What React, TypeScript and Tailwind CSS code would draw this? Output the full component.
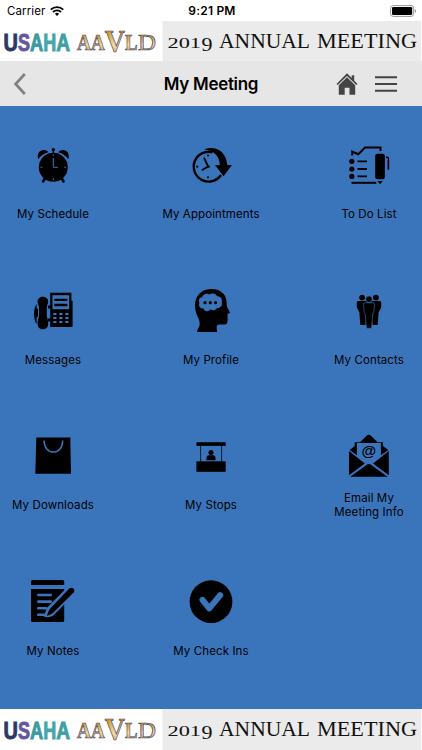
import type { ReactNode } from 'react';

const BLUE = '#3a75bb';

function Icon({ children }: { children: ReactNode }) {
  return (
    <svg viewBox="0 0 48 48" className="w-12 h-12 shrink-0" fill="#000">
      {children}
    </svg>
  );
}

function ScheduleIcon() {
  return (
    <Icon>
      <path d="M9.3 18.2C7.6 13.2 10.4 9 14.6 9c2 0 3.6.9 4.8 2.2-4 1-7.600 3.600-10.100 7z" />
      <path d="M39.300 18.200C41 13.200 38.200 9 34 9c-2 0-3.600.9-4.800 2.200 4 1 7.600 3.600 10.100 7z" />
      <circle cx="24.300" cy="8.600" r="1.700" />
      <path d="M23.600 9h1.400v4h-1.400z" />
      <path d="M16.500 36.500 14.200 40.300M32.200 36.500l2.200 3.800" stroke="#000" strokeWidth="2.800" strokeLinecap="round" />
      <circle cx="24.300" cy="26.200" r="14.500" />
      <path
        d="M24.300 17v9.300h4.600M24.300 13.200v1.600M24.300 37.200v2M11.400 26.200h2M35.200 26.200h2"
        fill="none"
        stroke={BLUE}
        strokeWidth="1"
      />
    </Icon>
  );
}

function AppointmentsIcon() {
  return (
    <Icon>
      <path
        d="M25.500 11.300A14.900 14.900 0 1 0 34 34"
        fill="none"
        stroke="#000"
        strokeWidth="2.400"
      />
      <path d="M17 8.500C27 4.500 39 9 40.200 24H45l-8.500 11.200L28 24h4.800C32.600 15 27 9.500 17 8.500z" />
      <path d="m17.300 17.300 3.900 8.200-5.700 3.300" fill="none" stroke="#000" strokeWidth="1.900" strokeLinecap="round" />
      <circle cx="21.200" cy="25.500" r="1.600" />
      <circle cx="21" cy="14.500" r="1.100" />
      <circle cx="10.300" cy="25.700" r="1.100" />
      <circle cx="21" cy="36.300" r="1.100" />
    </Icon>
  );
}

function TodoIcon() {
  return (
    <Icon>
      <path
        d="M7.200 14.500v-4l6.100 2.700 6.700-6.700h15.500v3.600"
        fill="none"
        stroke="#000"
        strokeWidth="2"
      />
      <circle cx="6.800" cy="20.300" r="2.600" />
      <circle cx="6.800" cy="28" r="2.600" />
      <circle cx="6.800" cy="35.400" r="2.600" />
      <path d="M12.500 20.300H22M12.500 28H22M12.500 35.400H22" stroke="#000" strokeWidth="1.800" />
      <path d="M6.500 41.800h24.800" stroke="#000" strokeWidth="2" />
      <rect x="30.200" y="12.800" width="9.700" height="25.400" rx="2.300" />
      <path d="M32.400 40h5.400L35 43.200z" />
      <path d="M41 16.300h1.200q1.200 0 1.200 1.200v11.300" fill="none" stroke="#000" strokeWidth="1.600" />
    </Icon>
  );
}

function MessagesIcon() {
  return (
    <Icon>
      <path d="M21.200 5.800h21.200v8h1.200V39q0 1-1 1H21.200z" />
      <rect x="23.500" y="8.200" width="16.700" height="14" fill={BLUE} />
      <path d="M25.300 12.800h13.100M25.300 18h13.100" stroke="#000" strokeWidth="2.300" />
      <path
        d="M24.300 27h3.200m2.800 0h3.200m2.800 0h3.200M24.300 31h3.200m2.800 0h3.200m2.800 0h3.200M24.300 35h3.200m2.800 0h3.200m2.800 0h3.200"
        stroke={BLUE}
        strokeWidth="1.800"
      />
      <path d="M8.600 14.500c0-6.500 10.600-6.500 10.600 0 0 2.500-1.400 4-1.400 6v8c0 2.200 1.400 3.800 1.400 8.500 0 7-10.600 7-10.600 0 0-4.700 1.400-6.300 1.400-8.500v-8c0-2-1.400-3.500-1.400-6z" />
      <path d="M7.600 17v3.600l1.400 2v6.600l-1.400 2V37c-3.400-5-3.400-15.500 0-20z" />
      <path d="M19 18.500h3v3h-3zM18.500 31.500h3v3h-3z" />
    </Icon>
  );
}

function ProfileIcon() {
  return (
    <Icon>
      <path d="M23.500 2C34 1.600 40 8 39.700 16.500c0 2.500.3 3.500 1.200 5l1.900 3.600c.3.700 0 1.200-.8 1.400l-1.500.4.100 6.300c0 2.800-.8 4.200-3.200 4.200h-5c-2.500 0-3 1.500-2.700 4.200l.6 3.400H10.200c-.4-2.500 2.500-4.500 2.500-8.500 0-5.500-4.700-8.500-4.700-18.500C8 9 14.500 2.300 23.500 2z" />
      <path
        d="M15 10.300c1-3 4.800-4.400 7.200-2.700 3-2 7-.8 7.800 1.700 3.500 0 5.600 2.700 4.800 5.700 1 3.800-1.800 6.500-4.800 6-1.500 2.800-4.600 2.700-6.500 1.300-1.800 2.700-6 2.400-7-.8-3.800.2-5.300-3.200-4-5.600-1.300-2.700-.5-5.200 2.500-5.600z"
        fill={BLUE}
      />
      <circle cx="18" cy="15.700" r="1.600" />
      <circle cx="23.300" cy="15.700" r="1.600" />
      <circle cx="28.600" cy="15.700" r="1.600" />
    </Icon>
  );
}

function ContactsIcon() {
  return (
    <Icon>
      <circle cx="17.100" cy="10.600" r="2.900" />
      <circle cx="30.900" cy="10.600" r="2.900" />
      <path d="M13.300 14h8.200l1 2v10L20.300 38h-5l-.9-12.500-2.600-5V15.500q0-1.500 1.500-1.500z" />
      <path d="M34.700 14h-8.200l-1 2v10l2.200 12h5l.9-12.500 2.600-5V15.500q0-1.500-1.500-1.500z" />
      <g stroke={BLUE} strokeWidth=".6">
        <circle cx="24" cy="12.200" r="3.200" />
        <path d="M20.300 15.800h7.400q2 0 1.800 2l-.7 7.500-1 1.500L26.600 41.200h-5.200l-1.200-14.400-1-1.500-.7-7.500q-.2-2 1.800-2z" />
      </g>
    </Icon>
  );
}

function DownloadsIcon() {
  return (
    <Icon>
      <path d="M7.300 5.600h34L42 41.700H6.300z" />
      <path
        d="M15 8.500c0 7 4.200 11.600 9.400 11.600S33.700 15.500 33.700 8.500"
        fill="none"
        stroke={BLUE}
        strokeWidth="1.500"
      />
    </Icon>
  );
}

function StopsIcon() {
  return (
    <Icon>
      <path d="M9.400 10.200h29.300v3.200q-1 1.400-2 0-1 1.400-2 0-1 1.400-2.100 0-1 1.400-2.100 0-1 1.400-2.100 0-1 1.400-2.100 0-1 1.400-2.100 0-1 1.400-2.100 0-1 1.400-2.100 0-1 1.400-2.100 0-1 1.400-2.100 0-1 1.400-2.100 0-1 1.400-2.200 0-1 1.400-2.100 0z" />
      <path d="M13.600 13.500v16M34.600 13.500v16" stroke="#000" strokeWidth=".8" />
      <circle cx="24" cy="20.400" r="2.500" />
      <path d="M19.500 28.300v-2.800q0-2.300 2.500-2.300h4q2.500 0 2.500 2.300v2.800z" />
      <path d="M9.400 29.300h29.300v10.500H9.400z" />
    </Icon>
  );
}

function EmailIcon() {
  return (
    <Icon>
      <path d="m4.700 18 5-4.100V10.300h5.200l6.700-6.500q2.200-1.900 4.400 0l6.700 6.500h5.200v3.600l5.400 4.100-7 5H11.500z" />
      <path d="M11.900 11h24v12.300L23.900 33l-12-9.700z" fill={BLUE} />
      <path d="m4 19 15.800 12.600L4 43.200zM43.800 19 28 31.600l15.800 11.600zM5.200 44.800l17-12.400q1.700-1 3.400 0l17 12.400z" />
      <text
        x="23.800"
        y="24.200"
        textAnchor="middle"
        fontFamily="Liberation Sans, sans-serif"
        fontWeight="700"
        fontSize="15"
      >
        @
      </text>
    </Icon>
  );
}

function NotesIcon() {
  return (
    <Icon>
      <path d="M3.500 2h30q1.700 0 1.700 1.700V7H2V3.500Q2 2 3.500 2zM2 11h33.200v31.500q0 1.500-1.500 1.500H3.500Q2 44 2 42.500z" />
      <path
        d="M9.300 17h12.500M9.300 23.600h12.500M9.300 30.200h8M9.300 36.700h8"
        stroke={BLUE}
        strokeWidth="2.600"
        strokeLinecap="round"
      />
      <path d="M38.500 9 19 28.800q-2 2.500-2.700 5.700L15 38.800q3.800.8 7.300-.3 1.700-.6 3-2L46 15.800z" fill={BLUE} />
      <path d="M40.500 10.300q2-1.400 3.900.3t.2 4L24.200 34.700q-2.600 2-6.300 3.400 1-4 2.900-7z" />
    </Icon>
  );
}

function CheckIcon() {
  return (
    <Icon>
      <circle cx="24" cy="23.700" r="21.400" />
      <path
        d="m15.500 21.800 6.800 8.600 10.900-13.200"
        fill="none"
        stroke={BLUE}
        strokeWidth="6"
        strokeLinecap="round"
        strokeLinejoin="round"
      />
    </Icon>
  );
}

const items = [
  { label: 'My Schedule', icon: ScheduleIcon },
  { label: 'My Appointments', icon: AppointmentsIcon },
  { label: 'To Do List', icon: TodoIcon },
  { label: 'Messages', icon: MessagesIcon },
  { label: 'My Profile', icon: ProfileIcon },
  { label: 'My Contacts', icon: ContactsIcon },
  { label: 'My Downloads', icon: DownloadsIcon },
  { label: 'My Stops', icon: StopsIcon },
  { label: 'Email My Meeting Info', icon: EmailIcon },
  { label: 'My Notes', icon: NotesIcon },
  { label: 'My Check Ins', icon: CheckIcon },
];

// letters of the two logos, each stretched to its own width
const usaha = [
  { char: 'U', x: 3.6, width: 14.4, fill: '#293868' },
  { char: 'S', x: 18, width: 12, fill: '#65589a' },
  { char: 'A', x: 30, width: 13.2, fill: '#3a9a9f' },
  { char: 'H', x: 43.2, width: 13, fill: '#48a6a8' },
  { char: 'A', x: 56.2, width: 13.8, fill: '#3f9fa3' },
];

const aavld = [
  { char: 'A', x: 77, y: 29, size: 22.5, width: 14 },
  { char: 'A', x: 91, y: 29, size: 22.5, width: 13.8 },
  { char: 'V', x: 104.8, y: 31.2, size: 31.5, width: 20.2 },
  { char: 'L', x: 125, y: 29, size: 22.5, width: 12.5 },
  { char: 'D', x: 138, y: 29, size: 22.5, width: 18 },
];

function Banner({ id }: { id: string }) {
  return (
    <svg viewBox="0 0 422 41" className="block w-[422px] h-[41px] shrink-0">
      <defs>
        <linearGradient id={id} x1="0" y1="0" x2="0" y2="1">
          <stop offset="0.15" stopColor="#c58a1e" />
          <stop offset="0.6" stopColor="#f3dfa0" />
          <stop offset="1" stopColor="#b98a3a" />
        </linearGradient>
      </defs>
      <rect width="422" height="41" fill="#fff" />
      <rect x="162.500" width="258.500" height="41" fill="#ebebeb" />
      <g fontFamily="Liberation Sans, sans-serif" fontWeight="700" fontSize="23">
        {usaha.map((l) => (
          <text
            key={l.x}
            x={l.x}
            y="30"
            fill={l.fill}
            stroke={l.fill}
            strokeWidth=".9"
            textLength={l.width}
            lengthAdjust="spacingAndGlyphs"
          >
            {l.char}
          </text>
        ))}
      </g>
      <g
        fontFamily="Liberation Serif, serif"
        fill={`url(#${id})`}
        stroke="#4a4268"
        strokeWidth=".7"
      >
        {aavld.map((l) => (
          <text
            key={l.x}
            x={l.x}
            y={l.y}
            fontSize={l.size}
            fontWeight={l.char === 'D' ? 400 : 700}
            textLength={l.width}
            lengthAdjust="spacingAndGlyphs"
          >
            {l.char}
          </text>
        ))}
      </g>
      <g fontFamily="Liberation Serif, serif" fill="#111">
        <text x="167.500" y="27" fontSize="15.500" textLength="33.500" lengthAdjust="spacingAndGlyphs">
          201
        </text>
        <text x="201.500" y="30" fontSize="19" textLength="11" lengthAdjust="spacingAndGlyphs">
          9
        </text>
        <text x="219" y="27" fontSize="22" textLength="91" lengthAdjust="spacingAndGlyphs">
          ANNUAL
        </text>
        <text x="317" y="27" fontSize="22" textLength="100" lengthAdjust="spacingAndGlyphs">
          MEETING
        </text>
      </g>
    </svg>
  );
}

function StatusBar() {
  return (
    <div className="grid grid-cols-3 items-center h-[21px] pl-[7px] pr-[5px] bg-white text-black">
      <div className="flex items-center gap-[5px]">
        <span className="pt-px text-[11.500px] leading-5 tracking-[0.1px]">Carrier</span>
        <svg viewBox="0 0 14 10" className="w-3.5 h-2.5" fill="none" stroke="#000" strokeWidth="1.900">
          <path d="M.8 3.700a8.800 8.800 0 0 1 12.400 0M3 6a5.700 5.700 0 0 1 8 0" />
          <path d="M7 9.900 4.900 7.800a3 3 0 0 1 4.200 0z" fill="#000" stroke="none" />
        </svg>
      </div>
      <span className="text-center text-[12px] font-semibold tracking-[0.2px]">9:21 PM</span>
      <svg viewBox="0 0 27 12" className="w-[27px] h-3 justify-self-end">
        <rect x=".6" y=".6" width="23" height="10.800" rx="2.600" fill="#fff" stroke="#999" strokeWidth="1" />
        <rect x="2" y="2" width="20.200" height="8" rx="1.300" />
        <path d="M24.800 4q1.400.5 1.400 2t-1.400 2z" fill="#999" />
      </svg>
    </div>
  );
}

function NavBar() {
  return (
    <header className="grid grid-cols-3 items-center h-[45px] pl-3.5 pr-[25px] bg-[#e6e6e6]">
      <svg viewBox="0 0 12 22" className="w-3 h-[22px]" fill="none" stroke="#808080" strokeWidth="2.600">
        <path d="M10.800 1 1.600 11l9.200 10" />
      </svg>
      <h1 className="-mr-[11px] pt-0.5 text-center text-[17px] font-semibold tracking-[-0.3px] whitespace-nowrap text-black">
        My Meeting
      </h1>
      <div className="flex items-center justify-end gap-[17px]">
        <svg viewBox="0 0 22 22" className="w-[22px] h-[22px]" fill="#444">
          <path d="M11 .3 15.700 5V2.300h2.500v5.200l3.300 3.400-1.200 1.200L11 2.900l-9.300 9.200-1.200-1.200z" />
          <path d="m11 4.300 8.200 8v9.500h-5.700v-7H8.700v7H2.800v-9.500z" />
        </svg>
        <svg viewBox="0 0 22 16" className="w-[22px] h-4" stroke="#444" strokeWidth="1.900">
          <path d="M0 1.200h22M0 8h22M0 14.800h22" />
        </svg>
      </div>
    </header>
  );
}

export default function App() {
  return (
    <div className="flex flex-col w-[422px] h-[750px] overflow-hidden bg-white font-['Inter',sans-serif]">
      <StatusBar />
      <div className="h-10 shrink-0 overflow-hidden">
        <Banner id="gold-top" />
      </div>
      <NavBar />
      <main className="grid grid-cols-[106px_106px_106px] justify-between content-start auto-rows-[145.700px] h-[603px] pt-[35px] bg-[#3a75bb]">
        {items.map((item) => (
          <div key={item.label} className="flex flex-col items-center">
            <item.icon />
            <div className="flex items-center justify-center h-[50px] w-[90px] text-center text-[11.500px] leading-[14px] tracking-[0.100px] text-black">
              <span className={item.label.length > 16 ? '' : 'whitespace-nowrap'}>{item.label}</span>
            </div>
          </div>
        ))}
      </main>
      <Banner id="gold-bottom" />
    </div>
  );
}
